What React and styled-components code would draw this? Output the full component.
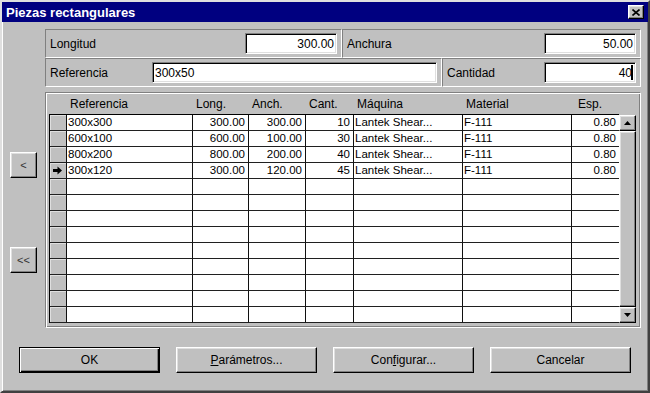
import React from 'react'
import styled, {createGlobalStyle} from 'styled-components'

const GlobalStyle = createGlobalStyle`
    body {
        margin: 0;
        font-family: "Liberation Sans", Arial, sans-serif;
        font-size: 12px;
        color: #000;
    }
`

const rows = [
    {ref: '300x300', long: '300.00', anch: '300.00', cant: '10', maq: 'Lantek Shear...', mat: 'F-111', esp: '0.80'},
    {ref: '600x100', long: '600.00', anch: '100.00', cant: '30', maq: 'Lantek Shear...', mat: 'F-111', esp: '0.80'},
    {ref: '800x200', long: '800.00', anch: '200.00', cant: '40', maq: 'Lantek Shear...', mat: 'F-111', esp: '0.80'},
    {ref: '300x120', long: '300.00', anch: '120.00', cant: '45', maq: 'Lantek Shear...', mat: 'F-111', esp: '0.80', current: true},
]

const TOTAL_ROWS = 13

const headers = ['', 'Referencia', 'Long.', 'Anch.', 'Cant.', 'Máquina', 'Material', 'Esp.']

const Arrow = () => (
    <svg width="9" height="9" viewBox="0 0 9 9">
        <path d="M0 3h4.5V0.5L9 4.5 4.5 8.5V6H0z" fill="#000" />
    </svg>
)

const Tri = ({down}) => (
    <svg width="7" height="4" viewBox="0 0 7 4">
        <path d={down ? 'M0 0h7L3.5 4z' : 'M3.5 0L7 4H0z'} fill="#000" />
    </svg>
)

const App = () => {
    const body = []
    for (let i = 0; i < TOTAL_ROWS; i++) {
        const r = rows[i]
        body.push(
            <React.Fragment key={i}>
                <Indicator>{r && r.current && <Arrow />}</Indicator>
                <Cell>{r && r.ref}</Cell>
                <Cell $right>{r && r.long}</Cell>
                <Cell $right>{r && r.anch}</Cell>
                <Cell $right>{r && r.cant}</Cell>
                <Cell>{r && r.maq}</Cell>
                <Cell>{r && r.mat}</Cell>
                <Cell $right $last>{r && r.esp}</Cell>
            </React.Fragment>
        )
    }

    return (
        <>
            <GlobalStyle />
            <Window>
                <TitleBar>
                    <Title>Piezas rectangulares</Title>
                    <CloseButton>
                        <svg width="8" height="7" viewBox="0 0 8 7">
                            <path d="M0.5 0.5L7.5 6.5M7.5 0.5L0.5 6.5" stroke="#000" strokeWidth="1.6" />
                        </svg>
                    </CloseButton>
                </TitleBar>

                <Body>
                    <Upper>
                        <Side>
                            <SmallButton>&lt;</SmallButton>
                            <SmallButton>&lt;&lt;</SmallButton>
                        </Side>

                        <Main>
                            <FieldPanel>
                                <FieldRow>
                                    <FieldCell $w={297}>
                                        <Label>Longitud</Label>
                                        <Input $w={92}>300.00</Input>
                                    </FieldCell>
                                    <FieldCell>
                                        <Label>Anchura</Label>
                                        <Input $w={92}>50.00</Input>
                                    </FieldCell>
                                </FieldRow>
                                <FieldRow>
                                    <FieldCell $w={397}>
                                        <Label>Referencia</Label>
                                        <Input $w={285} $left>300x50</Input>
                                    </FieldCell>
                                    <FieldCell>
                                        <Label>Cantidad</Label>
                                        <Input $w={92}>40<Caret /></Input>
                                    </FieldCell>
                                </FieldRow>
                            </FieldPanel>

                            <GridPanel>
                                <HeaderRow>
                                    {headers.map((h, i) => (
                                        <HeaderCell key={i} $pad={i === 7 ? 6 : 3}>{h}</HeaderCell>
                                    ))}
                                </HeaderRow>
                                <GridBody>
                                    <Table>{body}</Table>
                                    <ScrollBar>
                                        <ScrollButton><Tri /></ScrollButton>
                                        <Thumb />
                                        <ScrollButton><Tri down /></ScrollButton>
                                    </ScrollBar>
                                </GridBody>
                            </GridPanel>
                        </Main>
                    </Upper>

                    <ButtonRow>
                        <Button $default>OK</Button>
                        <Button><u>P</u>arámetros...</Button>
                        <Button>Con<u>f</u>igurar...</Button>
                        <Button>Cancelar</Button>
                    </ButtonRow>
                </Body>
            </Window>
        </>
    )
}

//styled components
const raised = `
    border: 1px solid;
    border-color: #fff #000 #000 #fff;
    box-shadow: inset -1px -1px #808080, inset 1px 1px #dfdfdf;
`

const Window = styled.div`
    width: 650px;
    height: 393px;
    box-sizing: border-box;
    background: #c0c0c0;
    border: 2px solid;
    border-color: #dfdfdf #404040 #404040 #dfdfdf;
    box-shadow: inset 1px 1px #fff, inset -1px -1px #808080;
    display: flex;
    flex-direction: column;
`

const TitleBar = styled.div`
    height: 20px;
    background: #000080;
    display: flex;
    align-items: center;
    justify-content: space-between;
    padding: 0 4px 0 4px;
`

const Title = styled.span`
    color: #fff;
    font-weight: bold;
    font-size: 13px;
`

const CloseButton = styled.div`
    width: 16px;
    height: 14px;
    box-sizing: border-box;
    background: #c0c0c0;
    ${raised}
    display: flex;
    align-items: center;
    justify-content: center;
`

const Body = styled.div`
    flex: 1;
    display: flex;
    flex-direction: column;
`

const Upper = styled.div`
    display: flex;
    margin-top: 7px;
`

const Side = styled.div`
    width: 43px;
    box-sizing: border-box;
    padding: 123px 0 0 8px;
    display: flex;
    flex-direction: column;
    gap: 69px;
`

const SmallButton = styled.div`
    width: 27px;
    height: 26px;
    box-sizing: border-box;
    ${raised}
    display: flex;
    align-items: center;
    justify-content: center;
    font-size: 11px;
    color: #333;
`

const Main = styled.div`
    width: 596px;
    display: flex;
    flex-direction: column;
    gap: 5px;
`

const FieldPanel = styled.div`
    display: flex;
    flex-direction: column;
`

const FieldRow = styled.div`
    display: flex;
    height: 29px;
`

const FieldCell = styled.div`
    ${p => p.$w ? `width: ${p.$w}px;` : 'flex: 1;'}
    box-sizing: border-box;
    border: 1px solid;
    border-color: #808080 #fff #fff #808080;
    display: flex;
    align-items: center;
    padding: 0 4px 0 4px;
`

const Label = styled.span`
    flex: 1;
`

const Input = styled.div`
    width: ${p => p.$w}px;
    height: 21px;
    box-sizing: border-box;
    background: #fff;
    border: 1px solid;
    border-color: #808080 #fff #fff #808080;
    box-shadow: inset 1px 1px #000, inset -1px -1px #dfdfdf;
    display: flex;
    align-items: center;
    justify-content: ${p => p.$left ? 'flex-start' : 'flex-end'};
    padding: 0 2px;
`

const Caret = styled.span`
    display: inline-block;
    width: 2px;
    height: 15px;
    background: #000;
    margin-left: -1px;
`

const GridPanel = styled.div`
    height: 236px;
    box-sizing: border-box;
    border: 1px solid;
    border-color: #808080 #fff #fff #808080;
    box-shadow: inset 1px 1px #fff, inset -1px -1px #808080;
    padding: 1px 4px 0 3px;
    display: flex;
    flex-direction: column;
`

const columns = '17px 126px 56px 57px 48px 109px 109px 47px'

const HeaderRow = styled.div`
    display: grid;
    grid-template-columns: ${columns};
    height: 20px;
    padding-left: 1px;
    align-items: center;
`

const HeaderCell = styled.div`
    padding-left: ${p => p.$pad}px;
    white-space: nowrap;
`

const GridBody = styled.div`
    display: flex;
`

const Table = styled.div`
    display: grid;
    grid-template-columns: ${columns};
    grid-auto-rows: 16px;
    border-left: 1px solid #000;
    border-top: 1px solid #000;
    background: #fff;
`

const Cell = styled.div`
    box-sizing: border-box;
    border-bottom: 1px solid #202020;
    border-right: ${p => p.$last ? 'none' : '1px solid #101010'};
    font-size: 11.5px;
    line-height: 15px;
    padding: 0 ${p => p.$right ? '3px' : '1px'} 0 ${p => p.$right ? '0' : '1px'};
    text-align: ${p => p.$right ? 'right' : 'left'};
    white-space: nowrap;
    overflow: hidden;
`

const Indicator = styled.div`
    box-sizing: border-box;
    background: #c0c0c0;
    border-bottom: 1px solid #202020;
    border-right: 1px solid #101010;
    box-shadow: inset 1px 1px #dfdfdf;
    display: flex;
    align-items: center;
    padding-left: 3px;
`

const ScrollBar = styled.div`
    width: 17px;
    height: 208px;
    margin-top: 1px;
    display: flex;
    flex-direction: column;
    background: #c0c0c0;
`

const ScrollButton = styled.div`
    height: 16px;
    box-sizing: border-box;
    ${raised}
    display: flex;
    align-items: center;
    justify-content: center;
`

const Thumb = styled.div`
    flex: 1;
    box-sizing: border-box;
    ${raised}
`

const ButtonRow = styled.div`
    display: flex;
    gap: 16px;
    padding-left: 17px;
    margin-top: 19px;
`

const Button = styled.div`
    width: 141px;
    height: 26px;
    box-sizing: border-box;
    display: flex;
    align-items: center;
    justify-content: center;
    ${p => p.$default ? `
        border: 1px solid #000;
        box-shadow: inset 1px 1px #fff, inset -1px -1px #000, inset -2px -2px #808080;
    ` : raised}
`

export default App
